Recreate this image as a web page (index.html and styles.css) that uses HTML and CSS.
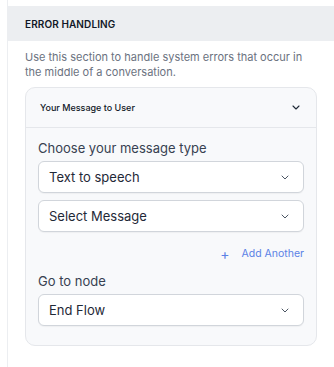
FILE: index.html
```html
<!DOCTYPE html>
<html>
<head>
<meta charset="utf-8">
<link rel="stylesheet" href="styles.css">
</head>
<body>
<div class="panel">
  <div class="section-head">ERROR HANDLING</div>
  <p class="desc">Use this section to handle system errors that occur in the middle of a conversation.</p>
  <div class="card">
    <div class="card-head">
      <span class="card-title">Your Message to User</span>
      <svg class="chev" width="8" height="5" viewBox="0 0 8 5"><path d="M1 1l3 3 3-3" fill="none" stroke="#1f2937" stroke-width="1.1" stroke-linecap="round" stroke-linejoin="round"/></svg>
    </div>
    <div class="card-body">
      <div class="label">Choose your message type</div>
      <div class="select"><span>Text to speech</span><svg class="schev" width="8" height="5" viewBox="0 0 8 5"><path d="M1 1l3 3 3-3" fill="none" stroke="#4b5563" stroke-width="1" stroke-linecap="round" stroke-linejoin="round"/></svg></div>
      <div class="select gap"><span>Select Message</span><svg class="schev" width="8" height="5" viewBox="0 0 8 5"><path d="M1 1l3 3 3-3" fill="none" stroke="#4b5563" stroke-width="1" stroke-linecap="round" stroke-linejoin="round"/></svg></div>
      <div class="add"><span class="plus">+</span><span>Add Another</span></div>
      <div class="label">Go to node</div>
      <div class="select"><span>End Flow</span><svg class="schev" width="8" height="5" viewBox="0 0 8 5"><path d="M1 1l3 3 3-3" fill="none" stroke="#4b5563" stroke-width="1" stroke-linecap="round" stroke-linejoin="round"/></svg></div>
    </div>
  </div>
</div>
</body>
</html>
```
FILE: styles.css
```css
html, body { margin: 0; padding: 0; background: #fff; }
body { font-family: Inter, "Noto Sans", sans-serif; color: #1f2937; }
.panel {
  margin-left: 7px;
  border-left: 1px solid #eceef1;
  min-height: 367px;
  padding-top: 6px;
  box-sizing: border-box;
}
.section-head {
  height: 35px;
  background: #eceef1;
  padding-left: 17px;
  display: flex;
  align-items: center;
  font-size: 10px;
  font-weight: 600;
  letter-spacing: 0.1px;
  color: #111827;
}
.desc {
  margin: 9px 17px 0 17px;
  font-size: 11px;
  line-height: 15px;
  color: #6b7280;
}
.card {
  margin: 7px 17px 0 17px;
  border: 1px solid #e5e7eb;
  border-radius: 10px;
  background: #f8f9fb;
}
.card-head {
  height: 39px;
  border-bottom: 1px solid #e5e7eb;
  display: flex;
  align-items: center;
  justify-content: space-between;
  padding: 0 16px 0 14px;
}
.card-title {
  font-size: 9px;
  font-weight: 500;
  color: #111827;
}
.card-body {
  padding: 12px 12px 19px 12px;
}
.label {
  font-size: 13px;
  line-height: 16px;
  color: #374151;
  margin-bottom: 5px;
}
.select {
  height: 32px;
  box-sizing: border-box;
  border: 1px solid #d1d5db;
  border-radius: 6px;
  background: #fff;
  box-shadow: 0 1px 1px rgba(0,0,0,0.04);
  display: flex;
  align-items: center;
  justify-content: space-between;
  padding: 0 14px 0 10px;
  font-size: 13px;
  color: #1f2937;
}
.select.gap { margin-top: 7px; }
.add {
  display: flex;
  justify-content: flex-end;
  align-items: center;
  gap: 12px;
  height: 16px;
  margin: 13px 0 12px 0;
  font-size: 10.5px;
  color: #5b82e6;
}
.plus { font-size: 14px; }
```
